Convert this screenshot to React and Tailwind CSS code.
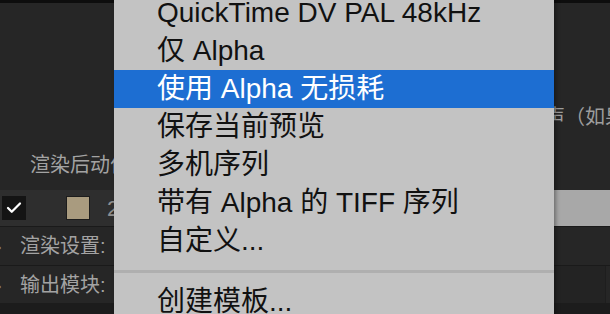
import { Check } from 'lucide-react';

const items = [
  'QuickTime DV PAL 48kHz',
  '仅 Alpha',
  '使用 Alpha 无损耗',
  '保存当前预览',
  '多机序列',
  '带有 Alpha 的 TIFF 序列',
  '自定义...',
];

function MenuItem({ label, active }) {
  return (
    <div
      className={`h-[38px] pl-[43px] flex items-center whitespace-nowrap ${
        active ? 'bg-[#1d6ed2] text-white' : 'text-[#111]'
      }`}
    >
      {label}
    </div>
  );
}

export default function App() {
  return (
    <div
      className="relative w-[610px] h-[314px] overflow-hidden bg-[#262626] flex flex-col"
      style={{ fontFamily: '"Liberation Sans", "Noto Sans CJK SC", sans-serif' }}
    >
      <div className="h-[3px] bg-[#0d0d0d]" />

      {/* panel behind the menu */}
      <div className="mt-[104px] h-[20px] pl-[545px] text-[20px] leading-[20px] text-[#9d9d9d] whitespace-nowrap">
        声（如果
      </div>
      <div className="mt-[28px] h-[20px] pl-[30px] text-[20px] leading-[20px] text-[#a3a3a3] whitespace-nowrap">
        渲染后动作
      </div>

      <div className="mt-[15px] h-[36px] bg-[#2e2e2e] flex items-center">
        <div className="ml-[2px] w-[24px] h-[24px] bg-[#141414] flex items-center justify-center">
          <Check className="w-[18px] h-[18px] text-white" strokeWidth={3} />
        </div>
        <div className="ml-[40px] w-[24px] h-[24px] bg-[#a99b7f] border border-[#1c1c1c]" />
        <span className="ml-[17px] text-[22px] text-[#8f8f8f]">2</span>
        <div className="flex-1" />
        <div className="w-[56px] self-stretch bg-[#a8a8a8]" />
      </div>
      <div className="h-px bg-[#1a1a1a]" />

      <div className="h-[38px] flex items-center text-[20px] text-[#a3a3a3]">
        <span className="-ml-[5px] w-[25px] text-[#8a8a8a]">›</span>
        <span>渲染设置:</span>
      </div>
      <div className="h-px bg-[#1a1a1a]" />

      <div className="h-[37px] flex items-center text-[20px] text-[#a3a3a3]">
        <span className="-ml-[5px] w-[25px] text-[#8a8a8a]">›</span>
        <span>输出模块:</span>
        <div className="flex-1" />
        <div className="w-[52px] self-stretch bg-[#232323] border-r border-[#1e1e1e] mr-[4px]" />
      </div>
      <div className="flex-1 bg-[#1c1c1c]" />

      {/* popup menu */}
      <div className="absolute left-[114px] top-[-6px] w-[440px] bg-[#c3c3c3] text-[28px] shadow-[2px_0_4px_rgba(0,0,0,0.35)]">
        {items.map((label, i) => (
          <MenuItem key={label} label={label} active={i === 2} />
        ))}
        <div className="pt-[10px] pb-[10px]">
          <div className="h-[3px] bg-[#afafaf]" />
        </div>
        <MenuItem label="创建模板..." />
      </div>
    </div>
  );
}
